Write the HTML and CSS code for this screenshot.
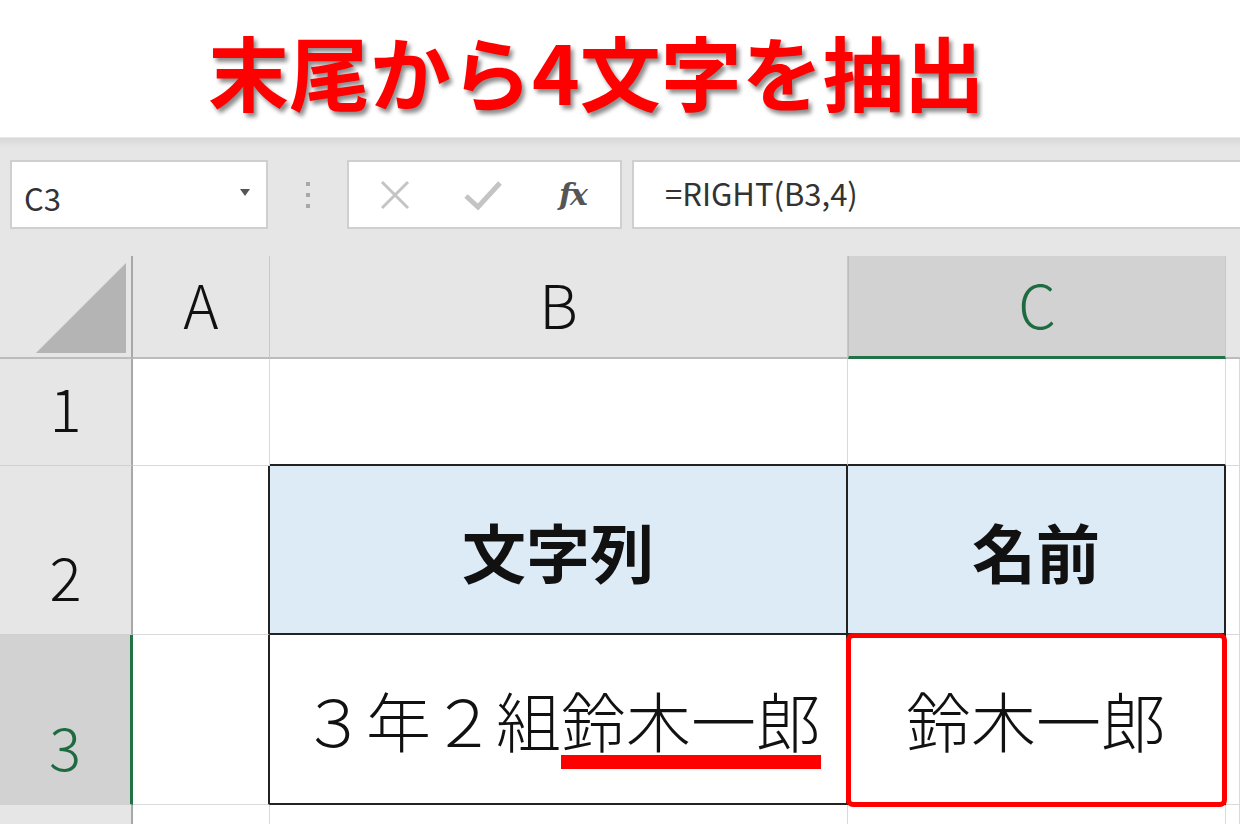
FILE: index.html
```html
<!DOCTYPE html>
<html>
<head>
    <title>末尾から4文字を抽出</title>
    <link rel="stylesheet" href="styles.css">
</head>
<body>
    <div class="title">末尾から4文字を抽出</div>

    <div class="formula-bar">
        <div class="name-box">
            <span>C3</span>
            <span class="arrow"></span>
        </div>
        <div class="grip"><i></i><i></i><i></i></div>
        <div class="fx-buttons">
            <svg class="btn-icon" width="32" height="30" viewBox="0 0 32 30">
                <path d="M3 2 L29 28 M29 2 L3 28" stroke="#c4c4c4" stroke-width="3" fill="none"/>
            </svg>
            <svg class="btn-icon" width="40" height="30" viewBox="0 0 40 30">
                <path d="M3 16 L15 27 L37 3" stroke="#c4c4c4" stroke-width="5" fill="none"/>
            </svg>
            <span class="fx">fx</span>
        </div>
        <div class="formula-input">=RIGHT(B3,4)</div>
    </div>

    <div class="sheet">
        <!-- column headers -->
        <div class="corner"><span class="corner-tri"></span></div>
        <div class="col-head">A</div>
        <div class="col-head">B</div>
        <div class="col-head active">C</div>
        <div class="col-head blank"></div>

        <!-- row 1 -->
        <div class="row-head">1</div>
        <div class="cell"></div>
        <div class="cell above-tbl"></div>
        <div class="cell above-tbl"></div>
        <div class="cell"></div>

        <!-- row 2 -->
        <div class="row-head">2</div>
        <div class="cell left-of-tbl"></div>
        <div class="cell tbl hdr">文字列</div>
        <div class="cell tbl hdr">名前</div>
        <div class="cell"></div>

        <!-- row 3 -->
        <div class="row-head active">3</div>
        <div class="cell left-of-tbl"></div>
        <div class="cell tbl val">３年２組<span class="mark">鈴木一郎</span></div>
        <div class="cell tbl val sel">鈴木一郎</div>
        <div class="cell"></div>

        <!-- row 4 -->
        <div class="row-head"></div>
        <div class="cell"></div>
        <div class="cell"></div>
        <div class="cell"></div>
        <div class="cell"></div>
    </div>
</body>
</html>
```

FILE: styles.css
```css
body {
    margin: 0;
    width: 1240px;
    height: 824px;
    overflow: hidden;
    font-family: "Noto Sans CJK JP", sans-serif;
    background-color: #fff;
}

.title {
    height: 137px;
    box-sizing: border-box;
    padding-left: 208px;
    padding-top: 20px;
    font-size: 81px;
    line-height: 100px;
    font-weight: 700;
    color: #ff0000;
    text-shadow: 3px 4px 4px rgba(0, 0, 0, 0.45);
}

.formula-bar {
    height: 118px;
    box-sizing: border-box;
    display: flex;
    align-items: flex-start;
    padding-top: 22px;
    padding-left: 10px;
    background: linear-gradient(#d8d8d8, #e6e6e6 10px);
    border-top: 1px solid #eaeaea;
}

.name-box {
    width: 258px;
    height: 69px;
    box-sizing: border-box;
    background-color: #fff;
    border: 2px solid #cfcfcf;
    display: flex;
    align-items: center;
    justify-content: space-between;
    padding: 6px 16px 0 12px;
    font-size: 31px;
    color: #333;
}

.arrow {
    width: 0;
    height: 0;
    border-left: 5px solid transparent;
    border-right: 5px solid transparent;
    border-top: 7px solid #555;
    margin-top: -10px;
}

.grip {
    width: 79px;
    display: flex;
    flex-direction: column;
    align-items: center;
    gap: 7px;
    padding-top: 22px;
}

.grip i {
    width: 4px;
    height: 4px;
    background-color: #a8a8a8;
}

.fx-buttons {
    width: 275px;
    height: 69px;
    box-sizing: border-box;
    background-color: #fff;
    border: 2px solid #cfcfcf;
    display: flex;
    align-items: center;
    padding-left: 30px;
    gap: 52px;
}

.fx {
    font-family: "DejaVu Serif", serif;
    font-style: italic;
    font-weight: 700;
    font-size: 30px;
    letter-spacing: -2px;
    color: #555;
    margin-left: 4px;
}

.formula-input {
    flex: 1;
    height: 69px;
    margin-left: 10px;
    box-sizing: border-box;
    background-color: #fff;
    border: 2px solid #cfcfcf;
    border-right: none;
    padding-left: 31px;
    font-size: 31px;
    line-height: 62px;
    color: #333;
}

.sheet {
    display: grid;
    grid-template-columns: 133px 137px 578px 378px 1fr;
    grid-template-rows: 104px 107px 169px 170px 1fr;
    height: 569px;
    background-color: #e6e6e6;
    font-weight: 300;
}

.corner {
    background-color: #e6e6e6;
    border-right: 2px solid #a8a8a8;
    border-bottom: 2px solid #bcbcbc;
    margin-top: 1px;
    position: relative;
}

.corner-tri {
    position: absolute;
    right: 5px;
    bottom: 4px;
    width: 0;
    height: 0;
    border-left: 90px solid transparent;
    border-bottom: 90px solid #b4b4b4;
}

.col-head {
    background-color: #e6e6e6;
    border-right: 1px solid #c8c8c8;
    border-bottom: 2px solid #bcbcbc;
    margin-top: 1px;
    display: flex;
    align-items: center;
    justify-content: center;
    padding-bottom: 8px;
    font-size: 60px;
    color: #111;
}

.col-head.active {
    background-color: #d2d2d2;
    border-left: 1px solid #bcbcbc;
    border-bottom: 3px solid #217346;
    color: #1e6b41;
}

.col-head.blank {
    border-right: none;
}

.row-head {
    background-color: #e6e6e6;
    border-right: 2px solid #a8a8a8;
    border-bottom: 1px solid #d0d0d0;
    display: flex;
    align-items: flex-end;
    justify-content: center;
    padding-bottom: 29px;
    font-size: 60px;
    line-height: 1;
    color: #111;
}

.row-head.active {
    background-color: #d2d2d2;
    border-right: 3px solid #217346;
    color: #1e6b41;
}

.cell {
    background-color: #fff;
    border-right: 1px solid #d9d9d9;
    border-bottom: 1px solid #d9d9d9;
    display: flex;
    align-items: center;
    justify-content: center;
}

.above-tbl {
    border-bottom: 2px solid #222;
}

.left-of-tbl {
    border-right: 2px solid #222;
}

.tbl {
    border-right: 2px solid #222;
    border-bottom: 2px solid #222;
    font-size: 64px;
    color: #111;
}

.hdr {
    background-color: #ddebf7;
    font-weight: 700;
}

.val {
    font-size: 65px;
    font-weight: 300;
    padding-left: 6px;
}

.mark {
    text-decoration: underline;
    text-decoration-color: #ff0000;
    text-decoration-thickness: 14px;
    text-underline-offset: 8px;
    text-decoration-skip-ink: none;
}

.sel {
    position: relative;
    padding-left: 0;
}

.sel::after {
    content: "";
    position: absolute;
    top: -2px;
    left: -2px;
    right: -3px;
    bottom: -4px;
    border: 5px solid #ff0000;
    border-radius: 7px;
    z-index: 1;
}
```
